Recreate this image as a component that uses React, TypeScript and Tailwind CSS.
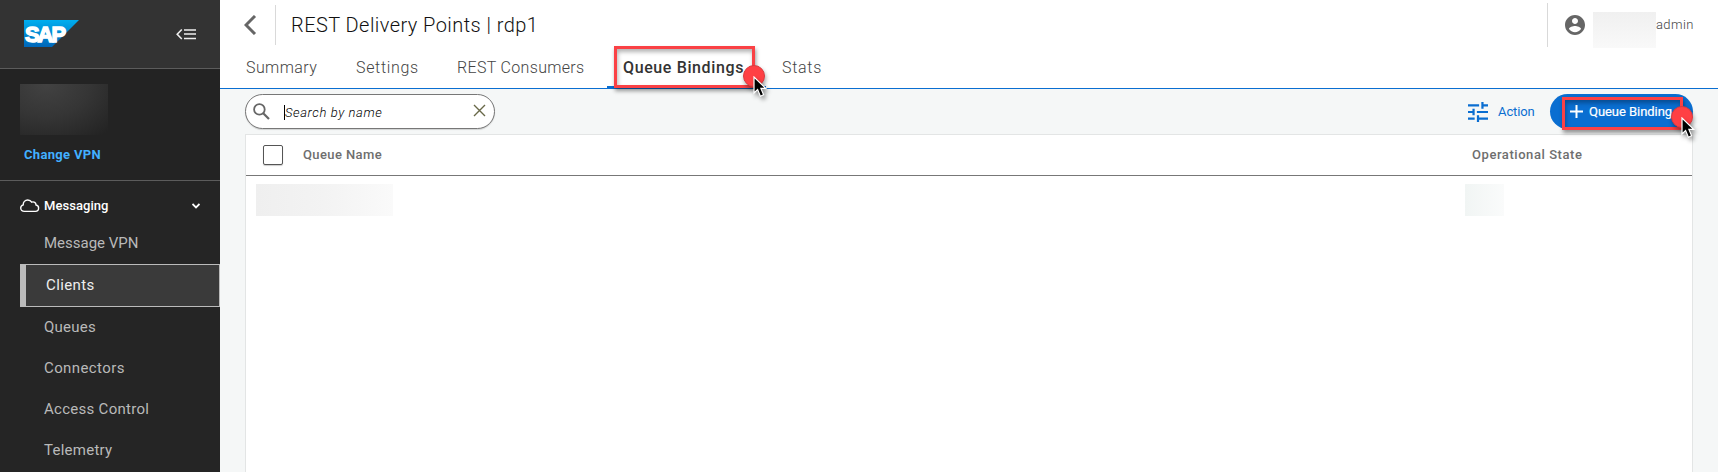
import React from "react";

const NAV = [
  { label: "Queues", cls: "tracking-[0.25px]" },
  { label: "Connectors", cls: "tracking-[0.4px]" },
  { label: "Access Control", cls: "tracking-[0.28px]" },
  { label: "Telemetry", cls: "tracking-[0.25px]" },
];

function Pointer({ className }: { className: string }) {
  return (
    <div className={`absolute size-[22px] rounded-full border border-[#d93a3f] bg-[#ff4044] shadow-[1px_3px_4px_rgba(0,0,0,0.35)] ${className}`}>
      <svg className="absolute left-[9px] top-[10px] drop-shadow-[2px_3px_2px_rgba(0,0,0,0.4)]" width="15" height="23" viewBox="0 0 15 23">
        <path d="M1 1V17L4.6 13.6L7.4 20.2L10.6 18.8L7.9 12.4H12.7Z" fill="#000" stroke="#fff" strokeWidth="1.2" />
      </svg>
    </div>
  );
}

function Sidebar() {
  return (
    <aside className="flex h-[472px] w-[220px] shrink-0 flex-col bg-[#252525] text-[#b9b9b9]">
      <div className="flex h-[69px] items-start justify-between border-b border-[#5c5c5c] bg-[#333] pl-6 pr-6 pt-5">
        <svg width="55" height="27" viewBox="0 0 55 27">
          <defs>
            <linearGradient id="sap" x1="0" y1="0" x2="0" y2="1">
              <stop offset="0" stopColor="#00aeef" />
              <stop offset="1" stopColor="#0066b8" />
            </linearGradient>
          </defs>
          <path d="M0 0H55L28 27H0Z" fill="url(#sap)" />
          <text x="1" y="21.7" fontFamily="Liberation Sans, sans-serif" fontWeight="700" fontSize="22" letterSpacing="-2" textLength="39" lengthAdjust="spacingAndGlyphs" fill="#fff" stroke="#fff" strokeWidth="1.5">SAP</text>
        </svg>
        <svg className="mt-[8px]" width="20" height="13" viewBox="0 0 20 13" stroke="#eee" fill="none">
          <path d="M5.8 1.5L1.2 6.2L5.8 11" strokeWidth="1.6" />
          <path d="M8 2H20M8 6H20M8 10.5H20" strokeWidth="1.3" />
        </svg>
      </div>
      <div className="h-[112px] border-b border-[#5c5c5c] bg-[#232323] pt-[15px]">
        <div className="ml-5 h-[51px] w-[88px] bg-[radial-gradient(100%_130%_at_30%_0%,#424242_0%,#353535_50%,#232323_100%)]" />
        <div className="ml-6 mt-[10px] text-[13px] font-bold leading-5 tracking-[0.32px] text-[#42b0ff]">Change VPN</div>
      </div>
      <div className="flex h-[50px] items-center pl-5 pr-5 text-white">
        <svg width="20" height="14" viewBox="0 0 20 14" fill="none" stroke="#fff" strokeWidth="1.4">
          <path d="M4.4 12.4C2.2 12.4.7 11 .7 9.1C.7 7.4 1.8 6.3 3.2 5.9C3.1 3 5 1 7.7 1C9.5 1 10.9 1.8 11.7 3.2C14 2.3 16 3.8 16 6C17.7 6.2 18.6 7.5 18.6 9.1C18.6 11 17.2 12.4 15.4 12.4Z" />
        </svg>
        <span className="ml-1 text-[13px] font-medium tracking-[0.05px]">Messaging</span>
        <svg className="ml-auto" width="8" height="6" viewBox="0 0 8 6" fill="none" stroke="#fff" strokeWidth="1.8"><path d="M.5 1L4 4.5L7.5 1" /></svg>
      </div>
      <div className="h-[33px] pl-11 text-[15px] leading-6">Message VPN</div>
      <div className="ml-5 flex h-[43px] shrink-0 items-center border border-l-[6px] border-[#bbb] bg-[#3a3a3a] pl-5 text-[15px] tracking-[0.4px] text-[#eee]">Clients</div>
      {NAV.map((n) => (
        <div key={n.label} className={`flex h-[41px] shrink-0 items-center pl-11 text-[15px] ${n.cls}`}>{n.label}</div>
      ))}
    </aside>
  );
}

function Header() {
  return (
    <header className="h-[89px] border-b border-[#0a6ed1] bg-white">
      <div className="flex h-[49px] items-center">
        <svg className="ml-6" width="13" height="20" viewBox="0 0 13 20" fill="none" stroke="#666" strokeWidth="3"><path d="M11 1L2 10L11 19" /></svg>
        <div className="ml-[18px] h-10 w-px bg-[#d9d9d9]" />
        <h1 className="ml-[15px] text-[20px] font-light tracking-[0.44px] text-[#111]">REST Delivery Points | rdp1</h1>
        <div className="ml-auto h-11 w-px bg-[#d9d9d9]" />
        <svg className="ml-[15px]" width="24" height="24" viewBox="0 0 24 24" fill="#666">
          <path d="M12 2C6.48 2 2 6.48 2 12s4.48 10 10 10 10-4.48 10-10S17.52 2 12 2zm0 3c1.66 0 3 1.34 3 3s-1.34 3-3 3-3-1.34-3-3 1.34-3 3-3zm0 14.2c-2.5 0-4.71-1.28-6-3.22.03-1.99 4-3.08 6-3.08 1.99 0 5.97 1.09 6 3.08-1.29 1.94-3.5 3.22-6 3.22z" />
        </svg>
        <div className="ml-[6px] mt-[11px] h-9 w-[63px] bg-linear-to-b from-[#f0f0f0] to-[#f9f9f9]" />
        <span className="w-[62px] text-[13px] font-light tracking-[0.4px] text-[#444]">admin</span>
      </div>
      <nav className="flex h-[39px] items-end text-[16px] font-light text-[#444]">
        <span className="ml-[26px] w-[110px] leading-10 tracking-[0.4px]">Summary</span>
        <span className="w-[101px] leading-10 tracking-[0.68px]">Settings</span>
        <span className="w-[150px] leading-10 tracking-[0.33px]">REST Consumers</span>
        <span className="relative flex h-[39px] w-[159px] items-end border-b-2 border-[#0a6ed1]">
          <span className="-mb-0.5 ml-4 whitespace-nowrap font-medium leading-10 tracking-[0.62px] text-[#333]">Queue Bindings</span>
          <span className="absolute -top-[3px] left-[7px] h-[42px] w-[141px] border-3 border-[#fa4145] shadow-[1px_3px_4px_rgba(0,0,0,0.4),inset_1px_3px_4px_rgba(0,0,0,0.3)]" />
          <Pointer className="left-[136px] top-[16px]" />
        </span>
        <span className="ml-4 leading-10 tracking-[0.7px]">Stats</span>
      </nav>
    </header>
  );
}

function Toolbar() {
  return (
    <div className="flex h-[45px] items-start pl-[25px] pr-[25px] pt-[5px]">
      <div className="flex h-[35px] w-[250px] items-center rounded-full border border-[#777] bg-white pl-[7px] pr-2 shadow-[0_1px_1px_rgba(0,0,0,0.15)]">
        <svg width="17" height="17" viewBox="0 0 17 17" fill="none" stroke="#666" strokeWidth="1.8"><circle cx="6.4" cy="6.4" r="5.3" /><path d="M10.2 10.2L16 16" strokeWidth="2.2" /></svg>
        <div className="ml-[14px] mt-px border-l border-black text-[13px] font-light leading-[15px] tracking-[0.6px] text-black italic">Search by name</div>
        <svg className="-mt-0.5 ml-auto" width="13" height="13" viewBox="0 0 13 13" fill="none" stroke="#686848" strokeWidth="1.4"><path d="M1 1L12 12M12 1L1 12" /></svg>
      </div>
      <div className="ml-auto flex h-[35px] items-center">
        <svg width="20" height="20" viewBox="0 0 18 18" fill="#0a6ed1"><path d="M0 14v2h6v-2H0zM0 2v2h10V2H0zm10 16v-2h8v-2h-8v-2H8v6h2zM4 6v2H0v2h4v2h2V6H4zm14 4V8H8v2h10zm-6-4h2V4h4V2h-4V0h-2v6z" /></svg>
        <span className="ml-[10px] w-[52px] text-[13px] -tracking-[0.1px] text-[#0a6ed1]">Action</span>
        <button className="relative flex h-[35px] w-[143px] items-center rounded-full bg-[#0a6ed1] text-[13px] text-white">
          <svg className="ml-5" width="13" height="13" viewBox="0 0 13 13" stroke="#fff" strokeWidth="2"><path d="M0 6.5H13M6.5 0V13" /></svg>
          <span className="ml-[6px] -tracking-[0.05px] [-webkit-text-stroke:0.2px_#fff]">Queue Binding</span>
          <span className="absolute left-3 top-[3px] h-[33px] w-[121px] border-3 border-[#fa4145] shadow-[1px_3px_4px_rgba(0,0,0,0.4),inset_1px_3px_4px_rgba(0,0,0,0.3)]" />
          <Pointer className="left-[121px] top-[12px]" />
        </button>
      </div>
    </div>
  );
}

export default function App() {
  return (
    <div className="flex h-[472px] w-[1718px] overflow-hidden bg-[#f5f7f7] font-[Roboto,sans-serif]">
      <Sidebar />
      <div className="flex min-w-0 flex-1 flex-col">
        <Header />
        <Toolbar />
        <section className="mx-[25px] flex-1 border border-b-0 border-[#e3e5e5] bg-white">
          <div className="flex h-[41px] items-center border-b border-[#777] text-[13px] font-medium text-[#6e6e6e]">
            <span className="ml-[17px] size-5 rounded-[2px] border border-[#555] bg-white shadow-[0_1px_1px_rgba(0,0,0,0.2)]" />
            <span className="ml-5 tracking-[0.4px]">Queue Name</span>
            <span className="ml-auto w-[220px] tracking-[0.56px]">Operational State</span>
          </div>
          <div className="flex pt-2">
            <div className="ml-[10px] h-8 w-[137px] bg-linear-to-r from-[#efefef] via-[#f3f3f3] to-[#fafafa]" />
            <div className="ml-auto mr-[188px] h-8 w-[39px] bg-linear-to-r from-[#f1f5f4] to-[#fafbfb]" />
          </div>
        </section>
      </div>
    </div>
  );
}
